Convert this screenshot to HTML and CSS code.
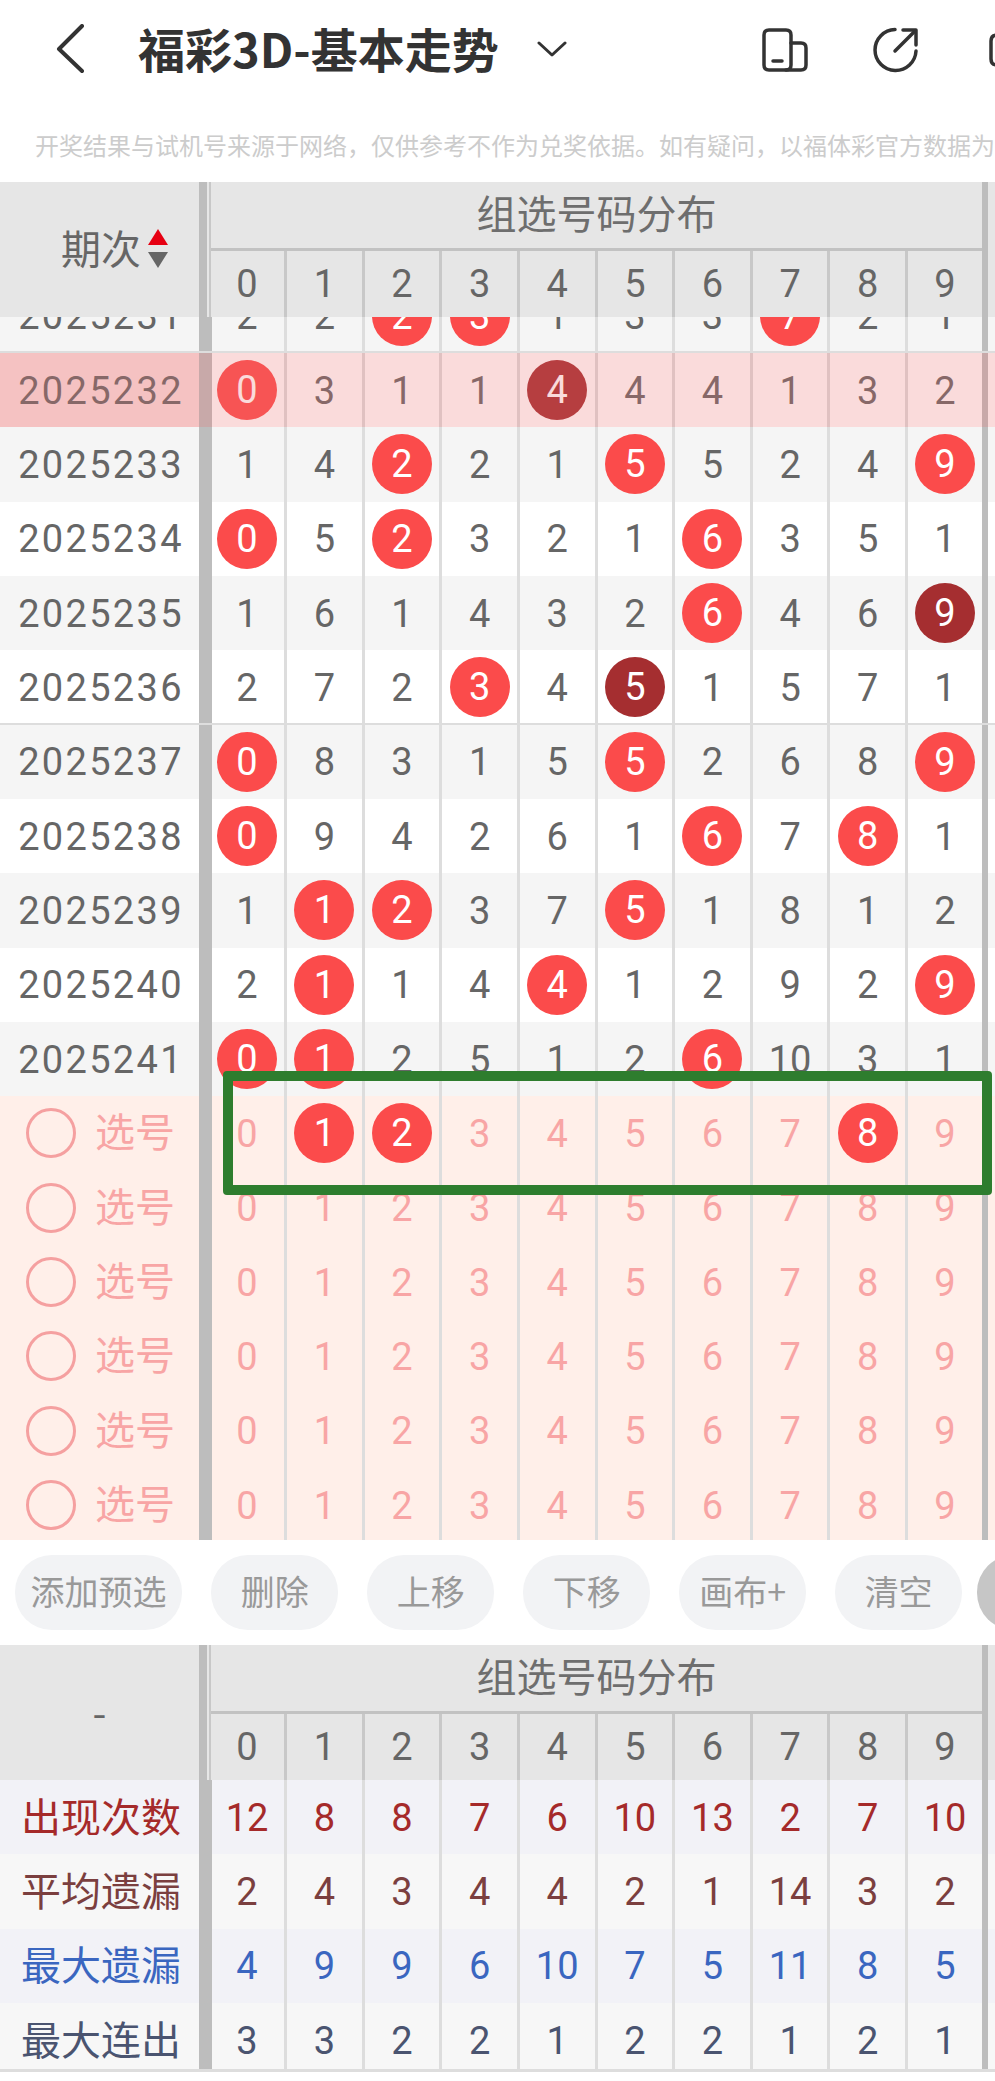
FILE: index.html
```html
<!DOCTYPE html>
<html>
<head>
	<title>福彩3D-基本走势</title>
	<link rel="stylesheet" href="styles.css">
</head>
<body>
<div class="page">
	<div class="topbar">
		<svg class="back" width="30" height="50" viewBox="0 0 30 50"><path d="M27 2 L4 25 L27 47"/></svg>
		<h1 class="title">福彩3D-基本走势</h1>
		<svg class="drop" width="30" height="16" viewBox="0 0 30 16"><path d="M2 2 L15 14 L28 2"/></svg>
		<svg class="tool-device" width="46" height="44" viewBox="0 0 46 44"><path d="M7 2 H24 Q29 2 29 7 V37 Q29 42 24 42 H7 Q2 42 2 37 V7 Q2 2 7 2 Z"/><path d="M29 15 H39 Q44 15 44 20 V37 Q44 42 39 42 H24"/><path d="M11 33 H20"/></svg>
		<svg class="tool-share" width="50" height="46" viewBox="0 0 50 46"><path d="M24 2.5 A20.5 20.5 0 1 0 45 24"/><path d="M24 24 L44 4"/><path d="M32 3 H45 V18"/></svg>
		<svg class="tool-more" width="30" height="34" viewBox="0 0 30 34"><path d="M14 2 H8 Q2 2 2 8 V26 Q2 32 8 32 H14"/></svg>
	</div>
	<div class="note">开奖结果与试机号来源于网络，仅供参考不作为兑奖依据。如有疑问，以福体彩官方数据为准。</div>

	<div class="head">
		<div class="head-label"><span class="head-text">期次</span><span class="sort"><i class="up"></i><i class="down"></i></span></div>
		<div class="head-bar"></div>
		<div class="head-main">
			<div class="head-title">组选号码分布</div>
			<div class="head-digits"><span>0</span><span>1</span><span>2</span><span>3</span><span>4</span><span>5</span><span>6</span><span>7</span><span>8</span><span>9</span></div>
		</div>
		<div class="end-bar"></div>
	</div>

	<div class="scroller">
		<div class="row row-odd row-line first"><div class="period">2025231</div><div class="bar"></div><span class="cell">2</span><span class="cell">2</span><span class="cell"><b class="ball">2</b></span><span class="cell"><b class="ball">3</b></span><span class="cell">1</span><span class="cell">3</span><span class="cell">3</span><span class="cell"><b class="ball">7</b></span><span class="cell">2</span><span class="cell">1</span><div class="end-bar"></div></div>
		<div class="row row-hl"><div class="period">2025232</div><div class="bar"></div><span class="cell"><b class="ball">0</b></span><span class="cell">3</span><span class="cell">1</span><span class="cell">1</span><span class="cell"><b class="ball dark">4</b></span><span class="cell">4</span><span class="cell">4</span><span class="cell">1</span><span class="cell">3</span><span class="cell">2</span><div class="end-bar"></div></div>
		<div class="row row-odd"><div class="period">2025233</div><div class="bar"></div><span class="cell">1</span><span class="cell">4</span><span class="cell"><b class="ball">2</b></span><span class="cell">2</span><span class="cell">1</span><span class="cell"><b class="ball">5</b></span><span class="cell">5</span><span class="cell">2</span><span class="cell">4</span><span class="cell"><b class="ball">9</b></span><div class="end-bar"></div></div>
		<div class="row"><div class="period">2025234</div><div class="bar"></div><span class="cell"><b class="ball">0</b></span><span class="cell">5</span><span class="cell"><b class="ball">2</b></span><span class="cell">3</span><span class="cell">2</span><span class="cell">1</span><span class="cell"><b class="ball">6</b></span><span class="cell">3</span><span class="cell">5</span><span class="cell">1</span><div class="end-bar"></div></div>
		<div class="row row-odd"><div class="period">2025235</div><div class="bar"></div><span class="cell">1</span><span class="cell">6</span><span class="cell">1</span><span class="cell">4</span><span class="cell">3</span><span class="cell">2</span><span class="cell"><b class="ball">6</b></span><span class="cell">4</span><span class="cell">6</span><span class="cell"><b class="ball dark">9</b></span><div class="end-bar"></div></div>
		<div class="row row-line"><div class="period">2025236</div><div class="bar"></div><span class="cell">2</span><span class="cell">7</span><span class="cell">2</span><span class="cell"><b class="ball">3</b></span><span class="cell">4</span><span class="cell"><b class="ball dark">5</b></span><span class="cell">1</span><span class="cell">5</span><span class="cell">7</span><span class="cell">1</span><div class="end-bar"></div></div>
		<div class="row row-odd"><div class="period">2025237</div><div class="bar"></div><span class="cell"><b class="ball">0</b></span><span class="cell">8</span><span class="cell">3</span><span class="cell">1</span><span class="cell">5</span><span class="cell"><b class="ball">5</b></span><span class="cell">2</span><span class="cell">6</span><span class="cell">8</span><span class="cell"><b class="ball">9</b></span><div class="end-bar"></div></div>
		<div class="row"><div class="period">2025238</div><div class="bar"></div><span class="cell"><b class="ball">0</b></span><span class="cell">9</span><span class="cell">4</span><span class="cell">2</span><span class="cell">6</span><span class="cell">1</span><span class="cell"><b class="ball">6</b></span><span class="cell">7</span><span class="cell"><b class="ball">8</b></span><span class="cell">1</span><div class="end-bar"></div></div>
		<div class="row row-odd"><div class="period">2025239</div><div class="bar"></div><span class="cell">1</span><span class="cell"><b class="ball">1</b></span><span class="cell"><b class="ball">2</b></span><span class="cell">3</span><span class="cell">7</span><span class="cell"><b class="ball">5</b></span><span class="cell">1</span><span class="cell">8</span><span class="cell">1</span><span class="cell">2</span><div class="end-bar"></div></div>
		<div class="row"><div class="period">2025240</div><div class="bar"></div><span class="cell">2</span><span class="cell"><b class="ball">1</b></span><span class="cell">1</span><span class="cell">4</span><span class="cell"><b class="ball">4</b></span><span class="cell">1</span><span class="cell">2</span><span class="cell">9</span><span class="cell">2</span><span class="cell"><b class="ball">9</b></span><div class="end-bar"></div></div>
		<div class="row row-odd"><div class="period">2025241</div><div class="bar"></div><span class="cell"><b class="ball">0</b></span><span class="cell"><b class="ball">1</b></span><span class="cell">2</span><span class="cell">5</span><span class="cell">1</span><span class="cell">2</span><span class="cell"><b class="ball">6</b></span><span class="cell">10</span><span class="cell">3</span><span class="cell">1</span><div class="end-bar"></div></div>

		<div class="row row-pick"><div class="period pick"><i class="ring"></i><span class="pick-text">选号</span></div><div class="bar"></div><span class="cell">0</span><span class="cell"><b class="ball">1</b></span><span class="cell"><b class="ball">2</b></span><span class="cell">3</span><span class="cell">4</span><span class="cell">5</span><span class="cell">6</span><span class="cell">7</span><span class="cell"><b class="ball">8</b></span><span class="cell">9</span><div class="end-bar"></div></div>
		<div class="row row-pick"><div class="period pick"><i class="ring"></i><span class="pick-text">选号</span></div><div class="bar"></div><span class="cell">0</span><span class="cell">1</span><span class="cell">2</span><span class="cell">3</span><span class="cell">4</span><span class="cell">5</span><span class="cell">6</span><span class="cell">7</span><span class="cell">8</span><span class="cell">9</span><div class="end-bar"></div></div>
		<div class="row row-pick"><div class="period pick"><i class="ring"></i><span class="pick-text">选号</span></div><div class="bar"></div><span class="cell">0</span><span class="cell">1</span><span class="cell">2</span><span class="cell">3</span><span class="cell">4</span><span class="cell">5</span><span class="cell">6</span><span class="cell">7</span><span class="cell">8</span><span class="cell">9</span><div class="end-bar"></div></div>
		<div class="row row-pick"><div class="period pick"><i class="ring"></i><span class="pick-text">选号</span></div><div class="bar"></div><span class="cell">0</span><span class="cell">1</span><span class="cell">2</span><span class="cell">3</span><span class="cell">4</span><span class="cell">5</span><span class="cell">6</span><span class="cell">7</span><span class="cell">8</span><span class="cell">9</span><div class="end-bar"></div></div>
		<div class="row row-pick"><div class="period pick"><i class="ring"></i><span class="pick-text">选号</span></div><div class="bar"></div><span class="cell">0</span><span class="cell">1</span><span class="cell">2</span><span class="cell">3</span><span class="cell">4</span><span class="cell">5</span><span class="cell">6</span><span class="cell">7</span><span class="cell">8</span><span class="cell">9</span><div class="end-bar"></div></div>
		<div class="row row-pick"><div class="period pick"><i class="ring"></i><span class="pick-text">选号</span></div><div class="bar"></div><span class="cell">0</span><span class="cell">1</span><span class="cell">2</span><span class="cell">3</span><span class="cell">4</span><span class="cell">5</span><span class="cell">6</span><span class="cell">7</span><span class="cell">8</span><span class="cell">9</span><div class="end-bar"></div></div>
	</div>

	<div class="actions">
		<button class="btn btn-wide">添加预选</button>
		<button class="btn">删除</button>
		<button class="btn">上移</button>
		<button class="btn">下移</button>
		<button class="btn">画布+</button>
		<button class="btn">清空</button>
		<button class="btn btn-grey"></button>
	</div>

	<div class="head">
		<div class="head-label head-dash">-</div>
		<div class="head-bar"></div>
		<div class="head-main">
			<div class="head-title">组选号码分布</div>
			<div class="head-digits"><span>0</span><span>1</span><span>2</span><span>3</span><span>4</span><span>5</span><span>6</span><span>7</span><span>8</span><span>9</span></div>
		</div>
		<div class="end-bar"></div>
	</div>

	<div class="stats">
		<div class="row stat-count"><div class="period">出现次数</div><div class="bar"></div><span class="cell">12</span><span class="cell">8</span><span class="cell">8</span><span class="cell">7</span><span class="cell">6</span><span class="cell">10</span><span class="cell">13</span><span class="cell">2</span><span class="cell">7</span><span class="cell">10</span><div class="end-bar"></div></div>
		<div class="row stat-avg"><div class="period">平均遗漏</div><div class="bar"></div><span class="cell">2</span><span class="cell">4</span><span class="cell">3</span><span class="cell">4</span><span class="cell">4</span><span class="cell">2</span><span class="cell">1</span><span class="cell">14</span><span class="cell">3</span><span class="cell">2</span><div class="end-bar"></div></div>
		<div class="row stat-max"><div class="period">最大遗漏</div><div class="bar"></div><span class="cell">4</span><span class="cell">9</span><span class="cell">9</span><span class="cell">6</span><span class="cell">10</span><span class="cell">7</span><span class="cell">5</span><span class="cell">11</span><span class="cell">8</span><span class="cell">5</span><div class="end-bar"></div></div>
		<div class="row stat-run"><div class="period">最大连出</div><div class="bar"></div><span class="cell">3</span><span class="cell">3</span><span class="cell">2</span><span class="cell">2</span><span class="cell">1</span><span class="cell">2</span><span class="cell">2</span><span class="cell">1</span><span class="cell">2</span><span class="cell">1</span><div class="end-bar"></div></div>
	</div>

	<div class="pick-frame"></div>
</div>
</body>
</html>
```

FILE: styles.css
```css
* {
	box-sizing: border-box;
}
body {
	margin: 0;
	background: #fff;
	font-family: Roboto, "Noto Sans CJK SC", sans-serif;
	color: #666;
}
.page {
	position: relative;
	width: 995px;
	height: 2081px;
	overflow: hidden;
}

/* top bar */
.topbar {
	display: flex;
	align-items: center;
	height: 98px;
	padding-left: 55px;
	white-space: nowrap;
}
.topbar svg {
	flex: none;
	fill: none;
	stroke: #333;
	stroke-linecap: round;
	stroke-linejoin: round;
}
.back {
	stroke-width: 4;
}
.title {
	flex: none;
	width: 358px;
	margin: 0 0 0 53px;
	padding-bottom: 4px;
	font-family: "Noto Sans CJK SC", sans-serif;
	font-size: 47px;
	font-weight: 700;
	color: #333;
}
.drop {
	margin-left: 41px;
	stroke-width: 3;
}
.tool-device {
	margin: 2px 0 0 195px;
	stroke-width: 3.5;
}
.tool-share {
	margin: 2px 0 0 63px;
	stroke-width: 3.5;
}
.tool-more {
	margin: 2px 0 0 68px;
	stroke-width: 3.5;
}
.note {
	height: 84px;
	padding: 31px 0 0 35px;
	font-family: "Noto Sans CJK SC", sans-serif;
	font-size: 24px;
	line-height: 32px;
	color: #ccc;
	white-space: nowrap;
}

/* table header */
.head {
	display: flex;
	height: 135px;
	background: #e6e6e6;
}
.head-label {
	display: flex;
	align-items: center;
	width: 199px;
	padding-left: 61px;
	font-family: "Noto Sans CJK SC", sans-serif;
	font-size: 40px;
	color: #666;
}
.head-text {
	padding-bottom: 5px;
}
.head-dash {
	justify-content: center;
	padding: 0 0 4px;
}
.sort {
	display: flex;
	flex-direction: column;
	gap: 7px;
	margin: 0 0 2px 7px;
}
.sort i {
	display: block;
	width: 0;
	height: 0;
	border-left: 10px solid transparent;
	border-right: 10px solid transparent;
}
.sort .up {
	border-bottom: 16px solid #e60012;
}
.sort .down {
	border-top: 16px solid #666;
}
.head-bar {
	flex: none;
	width: 12px;
	border-left: 8px solid #bdbdbd;
	border-right: 2px solid #c8c8c8;
}
.head-main {
	flex: none;
	width: 771px;
}
.head-title {
	height: 69px;
	border-bottom: 3px solid #c2c2c2;
	font-family: "Noto Sans CJK SC", sans-serif;
	font-size: 40px;
	line-height: 61px;
	text-align: center;
	color: #6e6e6e;
}
.head-digits {
	display: flex;
	height: 66px;
	padding-left: 1px;
	font-size: 38px;
	line-height: 66px;
	text-align: center;
}
.head-digits span {
	width: 77.63px;
	border-right: 3px solid #c8c8c8;
}
.head-digits span:first-child {
	width: 75px;
	padding-right: 2px;
}
.head-digits span:last-child {
	width: 74px;
	border-right: none;
}

/* rows */
.scroller {
	height: 1223px;
	overflow: hidden;
}
.row {
	position: relative;
	display: flex;
	height: 74.33px;
	background: #fff;
}
.first {
	margin-top: -38.33px;
}
.row-odd {
	background: #f5f5f5;
}
.row-line::after {
	content: "";
	position: absolute;
	left: 0;
	right: 0;
	bottom: -1px;
	height: 3px;
	background: #ddd;
}
.row-hl .period {
	background: #f8dede;
}
.row-hl::after {
	content: "";
	position: absolute;
	inset: 0;
	background: rgba(235, 110, 110, 0.25);
}
.period {
	flex: none;
	display: flex;
	align-items: center;
	justify-content: center;
	width: 199px;
	padding: 1px 0 0 3px;
	font-size: 38px;
	letter-spacing: 2.3px;
}
.bar {
	flex: none;
	width: 13px;
	background: #bdbdbd;
}
.end-bar {
	flex: none;
	width: 6px;
	background: #bdbdbd;
}
.cell {
	flex: none;
	display: flex;
	align-items: center;
	justify-content: center;
	width: 77.63px;
	padding-top: 1px;
	border-right: 3px solid #ddd;
	font-size: 38px;
}
.bar + .cell {
	width: 75px;
	padding-right: 2px;
}
.cell:nth-last-child(2) {
	width: 74px;
	border-right: none;
}
.ball {
	display: flex;
	align-items: center;
	justify-content: center;
	flex: none;
	width: 60px;
	height: 60px;
	margin-top: -1px;
	border-radius: 50%;
	background: #fb4b4b;
	color: #fff;
	font-weight: 400;
}
.dark {
	background: #a52e30;
}

/* rows for picking numbers */
.row-pick {
	background: #ffefe9;
	color: #f8a5a5;
}
.pick {
	justify-content: flex-start;
	padding: 0 0 0 26px;
	font-family: "Noto Sans CJK SC", sans-serif;
	font-size: 40px;
	letter-spacing: 0;
}
.pick-text {
	padding-bottom: 6px;
}
.ring {
	width: 50px;
	height: 50px;
	margin-right: 19px;
	border: 3px solid #f5a0a0;
	border-radius: 50%;
}
.pick-frame {
	position: absolute;
	left: 223px;
	top: 1071px;
	width: 769px;
	height: 124px;
	border: 10px solid #2e7d2e;
	border-radius: 4px;
}

/* button strip */
.actions {
	display: flex;
	height: 105px;
	padding: 15px 0 0 15px;
	gap: 29.4px;
	white-space: nowrap;
}
.btn {
	flex: none;
	width: 126.6px;
	height: 75px;
	padding: 0 0 5px;
	border: none;
	border-radius: 37px;
	background: #f2f3f5;
	font-family: "Noto Sans CJK SC", sans-serif;
	font-size: 34px;
	color: #999;
}
.btn-wide {
	width: 167px;
}
.btn-grey {
	margin-left: -14px;
	background: #c6c6c6;
}

/* statistics */
.stats {
	height: 292px;
	overflow: hidden;
	border-bottom: 3px solid #ddd;
}
.stats .period {
	padding: 0 0 5px 3px;
	font-family: "Noto Sans CJK SC", sans-serif;
	font-size: 40px;
	letter-spacing: 0;
}
.stat-count {
	background: #f2f2f7;
	color: #a52a2a;
}
.stat-avg {
	background: #f7f7f7;
	color: #7b3f3f;
}
.stat-max {
	background: #f2f2f7;
	color: #3a66c0;
}
.stat-run {
	background: #f7f7f7;
	color: #4a5470;
}
```
